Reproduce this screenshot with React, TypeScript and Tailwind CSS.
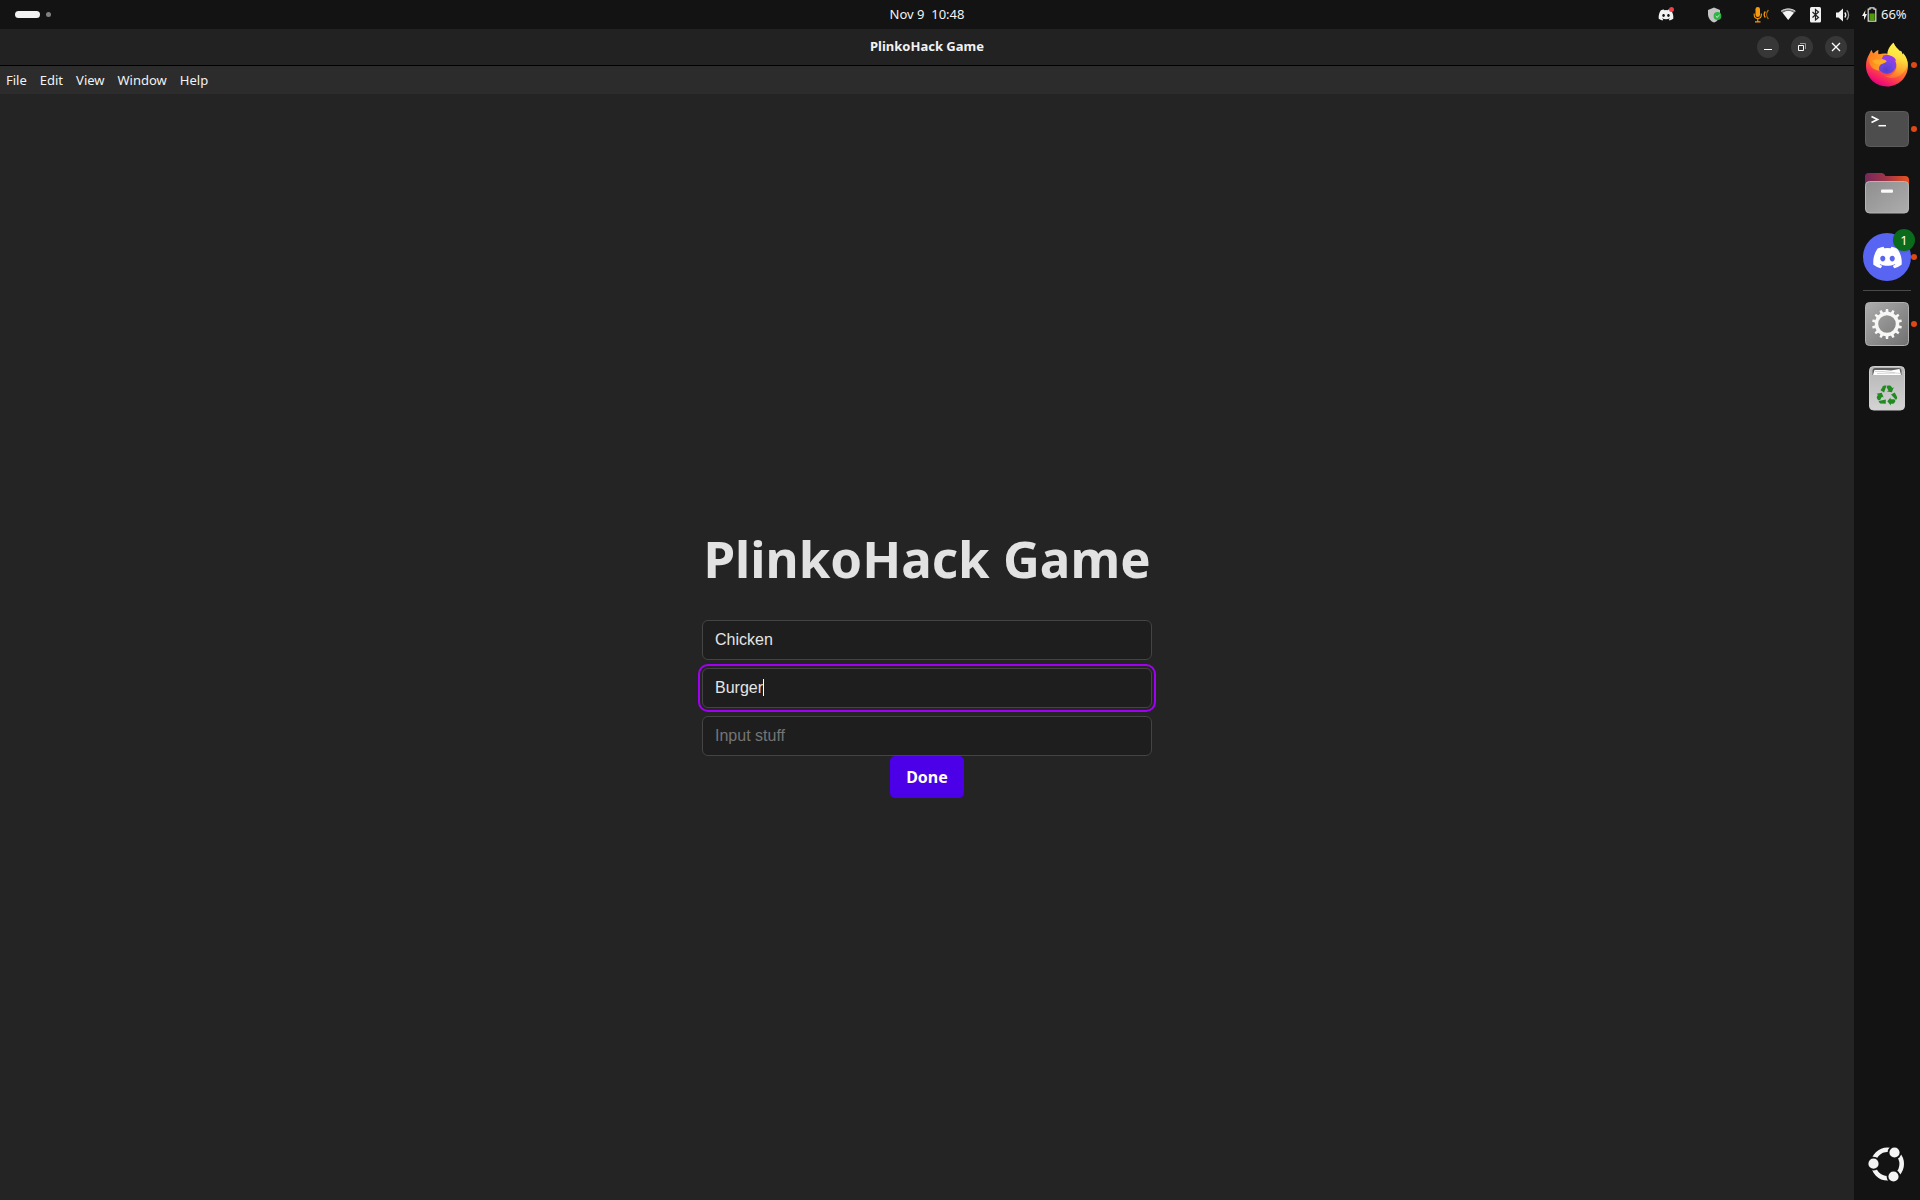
import React from "react";
import { FaDiscord } from "react-icons/fa";

const menus = ["File", "Edit", "View", "Window", "Help"];

function DiscordTray() {
  return (
    <span className="relative flex size-4 items-center justify-center">
      <FaDiscord className="size-4 text-[#f2f2f2]" />
      <span className="absolute right-0 top-0 size-[5px] rounded-full bg-[#f23f43]" />
    </span>
  );
}

function ShieldTray() {
  return (
    <svg viewBox="0 0 16 16" className="size-4" aria-hidden="true">
      <path d="M8 .5 14 3v4c0 4-2.300 7-6 8.600C4.300 14 2 11 2 7V3z" fill="#c4c4c4" />
      <circle cx="11.500" cy="9" r="3.900" fill="#2fb344" />
      <path d="m9.700 9 1.400 1.400L13.500 8" fill="none" stroke="#d9f5dd" strokeWidth="1" />
    </svg>
  );
}

function MicTray() {
  return (
    <svg viewBox="0 0 16 16" className="size-4" fill="none" stroke="#f79a10" aria-hidden="true">
      <rect x="2.500" y="0" width="4.500" height="10" rx="2.200" fill="#f79a10" stroke="none" />
      <path d="M1.200 6.500v1.500a3.500 3.500 0 0 0 7.100 0V6.500M4.750 11.500v3M2 14.900h5.500" strokeWidth="1.100" />
      <path d="M12.300 4.500a5 5 0 0 0 0 6" strokeWidth="1.300" />
      <path d="M15.400 3a7 7 0 0 0 0 9" strokeWidth="1.200" opacity=".7" />
    </svg>
  );
}

function WifiTray() {
  return (
    <svg viewBox="0 0 16 16" className="size-4" aria-hidden="true">
      <path d="M1 4.200C5 .7 11.500 .7 15.500 4.200l-1.300 1.500C10.800 2.900 5.700 2.900 2.300 5.700z" fill="#8a8a8a" />
      <path d="M2.500 5.700c3.300-2.700 8.200-2.700 11.500 0L8.200 13z" fill="#f5f5f5" />
      <path d="M1 4.200C5 1.200 11.500 1.200 15.500 4.200" fill="none" stroke="#f5f5f5" strokeWidth=".8" />
    </svg>
  );
}

function BluetoothTray() {
  return (
    <svg viewBox="0 0 16 16" className="size-4" aria-hidden="true">
      <rect x="3" y="0" width="11" height="15.500" rx="1.500" fill="#f2f2f2" />
      <path d="m5.500 5 6 5.500-3 2.500V2.500l3 2.500-6 5.500" fill="none" stroke="#222" strokeWidth="1.200" />
    </svg>
  );
}

function VolumeTray() {
  return (
    <svg viewBox="0 0 16 16" className="size-4" fill="none" aria-hidden="true">
      <path d="M2 5.500h2.500L9 1.500v13l-4.500-4H2z" fill="#f2f2f2" />
      <path d="M10.800 5.500a4 4 0 0 1 0 5" stroke="#f2f2f2" strokeWidth="1.300" />
      <path d="M12.800 3.300a7 7 0 0 1 0 9.400" stroke="#9a9a9a" strokeWidth="1.300" />
    </svg>
  );
}

function BatteryTray() {
  return (
    <svg viewBox="0 0 16 16" className="size-4" aria-hidden="true">
      <path d="M4.500 3 1 9h2v4l3-6H4z" fill="#f2f2f2" />
      <path d="M9 2.200V.8h4v1.400h1.800v12H7.200v-12z" fill="none" stroke="#e0e0e0" strokeWidth="1.200" />
      <path d="M8.500 6.500h5.200v7H8.500z" fill="#4e9a06" />
    </svg>
  );
}

function Firefox() {
  return (
    <svg viewBox="0 0 48 48" className="size-12" aria-hidden="true">
      <defs>
        <linearGradient id="fx-body" x1=".8" y1="0" x2=".3" y2="1">
          <stop offset="0" stopColor="#fff44f" />
          <stop offset=".35" stopColor="#ffa02e" />
          <stop offset=".62" stopColor="#ff5d36" />
          <stop offset=".88" stopColor="#f5156c" />
          <stop offset="1" stopColor="#d9007f" />
        </linearGradient>
        <linearGradient id="fx-flame" x1=".6" y1="0" x2=".4" y2="1">
          <stop offset="0" stopColor="#fff44f" />
          <stop offset=".4" stopColor="#ffe141" />
          <stop offset=".75" stopColor="#ffa52c" />
          <stop offset="1" stopColor="#ff6a35" />
        </linearGradient>
        <radialGradient id="fx-globe" cx=".45" cy=".8" r=".85">
          <stop offset="0" stopColor="#5440c8" />
          <stop offset=".55" stopColor="#7a46e8" />
          <stop offset="1" stopColor="#b833e1" />
        </radialGradient>
        <linearGradient id="fx-head" x1="0" y1="0" x2="1" y2=".6">
          <stop offset="0" stopColor="#ff7a20" />
          <stop offset="1" stopColor="#ffa81f" />
        </linearGradient>
      </defs>
      <path d="M30.500 1.800c1 3.400 3.700 5.500 6.700 8.700l.7-.8c.8 1.300 1.300 2.600 1.600 4l.9-.7C43.800 17.500 45 21 45 24.500 45 36.200 35.700 45.500 24 45.500S3 36.200 3 24.800C3 20 4.300 16 6.700 12.500c.4-1.500 1-2.700 2-3.800.3 1.600.8 2.900 1.800 3.900 1.300-1.700 3-3 5-3.600-.4 1.700-.4 3.200.2 4.600 3-1.300 6.400-1.200 9.300-.7.400-4.300 2.300-8.100 5.500-11.100z" fill="url(#fx-body)" />
      <circle cx="24" cy="23.300" r="9.600" fill="url(#fx-globe)" />
      <path d="M30.500 1.800c-4 3.500-6.500 8-6 12.200 3.500 1 5.800 3 7.500 5.500 2.500 4.500 2 9.500-1.200 12.500-2.300 2.200-5.500 3.200-8.800 2.800 3 2.300 8 3 12.500 1C40.500 33 44.500 28 44.500 22c0-2.600-1.200-5.700-2.700-7.800l-1.800-2.200-.5 1.700c-.3-1.400-.8-2.700-1.600-4l-.7.800c-3-3.200-5.700-5.300-6.700-8.700z" fill="url(#fx-flame)" />
      <path d="M24.500 14c4.500.6 8 2.700 8.800 6.200-1.500-1.300-3-1.500-4.300-1.500-1-.8-1.500-2.200-4-2.600-2-.4-4.600.2-5.600.9.600-1.600 2.600-3 5.100-3z" fill="#9a3be6" />
      <path d="M6.700 12.500c2-.2 4.500.2 6.300 1.400 2.900-1.100 5.500-.5 7.300 1.200l-1.700 2.400c2 1 4.700 1.200 5 2.700-1.500 2.300-5.300 2.200-6.700 4.200-1.300 1.900-1.400 3.600-.6 5.300-5.300-.5-8.800-3.600-9.800-7.900C5.500 18.200 5.500 15.300 6.700 12.500z" fill="url(#fx-head)" />
      <path d="M9 20c4-2.200 10-1.500 14.600.2-2 2.400-5.600 2-7.100 3.600-2.500-.3-5.500-1.400-7.500-3.800z" fill="#ffb42b" opacity=".7" />
    </svg>
  );
}

function Terminal() {
  return (
    <svg viewBox="0 0 48 48" className="size-12" aria-hidden="true">
      <rect x="2.500" y="6.500" width="43" height="35" rx="4" fill="#4d4d4d" stroke="#5c5c5c" />
      <path d="m8.500 11.500 6 3-6 3" fill="none" stroke="#fff" strokeWidth="1.700" />
      <path d="M15.500 20.700H23" stroke="#fff" strokeWidth="1.500" />
    </svg>
  );
}

function Files() {
  return (
    <svg viewBox="0 0 48 48" className="size-12" aria-hidden="true">
      <defs>
        <linearGradient id="folder-back" x1="0" x2="1">
          <stop offset="0" stopColor="#77275c" />
          <stop offset=".5" stopColor="#a33546" />
          <stop offset="1" stopColor="#e95420" />
        </linearGradient>
        <linearGradient id="folder-front" x1="0" y1="0" x2="1" y2="1">
          <stop offset="0" stopColor="#8e8e8e" />
          <stop offset="1" stopColor="#adadad" />
        </linearGradient>
      </defs>
      <path d="M2 7.500A3.500 3.500 0 0 1 5.500 4H19q1.500 0 2.500 1.500L22.500 7H42a4 4 0 0 1 4 4v12H2z" fill="url(#folder-back)" />
      <rect x="2.500" y="12.500" width="43" height="31.500" rx="4" fill="url(#folder-front)" stroke="#b4b4b4" />
      <rect x="18" y="20.500" width="12" height="3.200" rx="1" fill="#fafafa" />
    </svg>
  );
}

function Discord() {
  return (
    <span className="relative flex size-12 items-center justify-center rounded-full bg-[#5865f2]">
      <FaDiscord className="size-[31px] text-white" />
      <span className="absolute -right-[4px] -top-[4px] flex size-[22px] items-center justify-center rounded-full bg-[#0b6b1c] text-[13px] leading-none text-white shadow">
        1
      </span>
    </span>
  );
}

function Settings() {
  const teeth = Array.from({ length: 14 }, (_, i) => (i * 360) / 14);
  return (
    <svg viewBox="0 0 48 48" className="size-12" aria-hidden="true">
      <defs>
        <linearGradient id="set-bg" x1="0" y1="0" x2="1" y2="1">
          <stop offset="0" stopColor="#adadad" />
          <stop offset="1" stopColor="#707070" />
        </linearGradient>
      </defs>
      <rect x="2.500" y="2.500" width="43" height="43" rx="4" fill="url(#set-bg)" stroke="#b0b0b0" />
      <circle cx="24" cy="24" r="10.500" fill="none" stroke="#f7f7f5" strokeWidth="3.400" />
      {teeth.map((a) => (
        <path key={a} d="M22.400 13h3.200l-.5-4h-2.200z" fill="#f7f7f5" transform={`rotate(${a} 24 24)`} />
      ))}
    </svg>
  );
}

function Trash() {
  return (
    <svg viewBox="0 0 48 48" className="size-12" aria-hidden="true">
      <defs>
        <linearGradient id="bin" x1="0" y1="0" x2="0" y2="1">
          <stop offset="0" stopColor="#b5b5b5" />
          <stop offset="1" stopColor="#d4d4d4" />
        </linearGradient>
      </defs>
      <rect x="6.500" y="2.500" width="35" height="43.500" rx="4" fill="url(#bin)" stroke="#cfcfcf" />
      <path d="M9.500 11V7a3 3 0 0 1 3-3h23a3 3 0 0 1 3 3v4z" fill="#5e5e5e" />
      <path d="M10 11l1.500-5H22l6 .5 8.500-1.500L38 11z" fill="#fff" />
      <path d="M12 7.500h9l16 2M14 9.500l18-.5" stroke="#bbb" strokeWidth=".6" fill="none" />
      <g fill="#218a21">
        {[0, 120, 240].map((a) => (
          <g key={a} transform={`translate(24 31.500) rotate(${a})`}>
            <path d="M-6.500-5.200-4-9.200q.6-.9 1.600-.9h1.900L-2.900-3z" />
            <path d="M.4-10.100h2.200q1 0 1.500.9l1.100 1.800 1.600-.9-1.900 5.100-5-.8 1.600-1-1.900-3.200z" />
          </g>
        ))}
      </g>
    </svg>
  );
}

function UbuntuLogo() {
  return (
    <svg viewBox="0 0 48 48" className="size-12" aria-hidden="true">
      <circle cx="24.500" cy="24" r="14.200" fill="none" stroke="#f4f4f4" strokeWidth="4.600" />
      <g fill="#f4f4f4" stroke="#131313" strokeWidth="1.800">
        <circle cx="10.500" cy="23.700" r="6" />
        <circle cx="31.500" cy="12.500" r="6" />
        <circle cx="30.500" cy="36.500" r="6" />
      </g>
    </svg>
  );
}

function DockItem({ label, running, children }: { label: string; running?: boolean; children: React.ReactNode }) {
  return (
    <button type="button" aria-label={label} className="relative flex h-16 w-full items-center justify-center">
      {children}
      {running && <span className="absolute right-[3px] top-[29px] size-[6px] rounded-full bg-[#dd4814]" />}
    </button>
  );
}

const winButton = "flex size-[22px] items-center justify-center rounded-full bg-[#373737]";
const field =
  "h-10 w-full rounded-[6px] border border-[#444] bg-[#1e1e1e] px-3 font-['Liberation_Sans',sans-serif] text-[16px] text-[#e5e5e5] outline-none placeholder:text-[#757575]";

export default function App() {
  return (
    <div className="flex min-h-screen flex-col bg-[#131313] font-['Noto_Sans',sans-serif] text-[13px] text-[#f2f2f2]">
      <header className="grid h-[29px] grid-cols-[minmax(0,1fr)_auto_minmax(0,1fr)] items-center pr-[66px]">
        <div className="flex items-center gap-[6px] pl-[15px]">
          <span className="h-[7px] w-[25px] rounded-full bg-[#f2f2f2]" />
          <span className="size-[5px] rounded-full bg-[#808080]" />
        </div>
        <time className="whitespace-pre">Nov 9  10:48</time>
        <div className="-mr-[66px] flex items-center justify-end gap-[11px] pr-3">
          <div className="mr-5 flex gap-8">
            <DiscordTray />
            <ShieldTray />
          </div>
          <MicTray />
          <WifiTray />
          <BluetoothTray />
          <VolumeTray />
          <div className="flex items-center gap-1">
            <BatteryTray />
            <span className="w-[27px]">66%</span>
          </div>
        </div>
      </header>

      <div className="flex flex-1">
        <div className="flex flex-1 flex-col bg-[#242424]">
          <div className="grid h-[37px] grid-cols-[minmax(0,1fr)_auto_minmax(0,1fr)] items-center border-b border-black bg-[#222]">
            <div />
            <div className="font-bold">PlinkoHack Game</div>
            <div className="flex justify-end gap-3 pr-[7px]">
              <button type="button" aria-label="Minimize" className={winButton}>
                <svg viewBox="0 0 10 10" className="size-[10px]" aria-hidden="true">
                  <path d="M1 7.500h8" stroke="#fff" />
                </svg>
              </button>
              <button type="button" aria-label="Restore" className={winButton}>
                <svg viewBox="0 0 10 10" className="size-[10px]" fill="none" aria-hidden="true">
                  <path d="M1.500 3.500h5v5h-5z" stroke="#fff" />
                  <path d="M3 1.500h5.500V7" stroke="#999" />
                </svg>
              </button>
              <button type="button" aria-label="Close" className={winButton}>
                <svg viewBox="0 0 10 10" className="size-[10px]" aria-hidden="true">
                  <path d="m1 1 8 8M9 1 1 9" stroke="#fff" strokeWidth="1.300" />
                </svg>
              </button>
            </div>
          </div>

          <nav className="flex h-7 items-center gap-[13px] bg-[#2c2c2c] px-[6px] pt-0.5">
            {menus.map((m) => (
              <button type="button" key={m}>
                {m}
              </button>
            ))}
          </nav>

          <main className="flex flex-1 flex-col items-center justify-center">
            <form className="flex w-[450px] flex-col items-center" onSubmit={(e) => e.preventDefault()}>
              <h1 className="whitespace-nowrap py-[34px] text-[51px] font-bold leading-[56px] text-[#e2e2e2]">
                PlinkoHack Game
              </h1>
              <div className="flex w-full flex-col gap-2">
                <input aria-label="First entry" defaultValue="Chicken" className={field} />
                <div className="relative flex rounded-[6px] outline-2 outline-offset-2 outline-[#a200f2]">
                  <input aria-label="Second entry" defaultValue="Burger" className={field} />
                  <span className="absolute left-[61px] top-[11px] h-[17px] w-px bg-white" />
                </div>
                <input aria-label="Third entry" placeholder="Input stuff" className={field} />
              </div>
              <button type="submit" className="h-[42px] rounded-[5px] bg-[#4b00e8] px-4 text-[16px] font-bold text-white">
                Done
              </button>
            </form>
          </main>
        </div>

        <aside className="flex w-[66px] flex-col items-center pb-3 pt-1">
          <DockItem label="Firefox" running><Firefox /></DockItem>
          <DockItem label="Terminal" running><Terminal /></DockItem>
          <DockItem label="Files"><Files /></DockItem>
          <DockItem label="Discord" running><Discord /></DockItem>
          <div className="my-px h-px w-12 bg-[#4a4a4a]" />
          <DockItem label="Settings" running><Settings /></DockItem>
          <DockItem label="Trash"><Trash /></DockItem>
          <button type="button" aria-label="Show applications" className="mt-auto">
            <UbuntuLogo />
          </button>
        </aside>
      </div>
    </div>
  );
}
